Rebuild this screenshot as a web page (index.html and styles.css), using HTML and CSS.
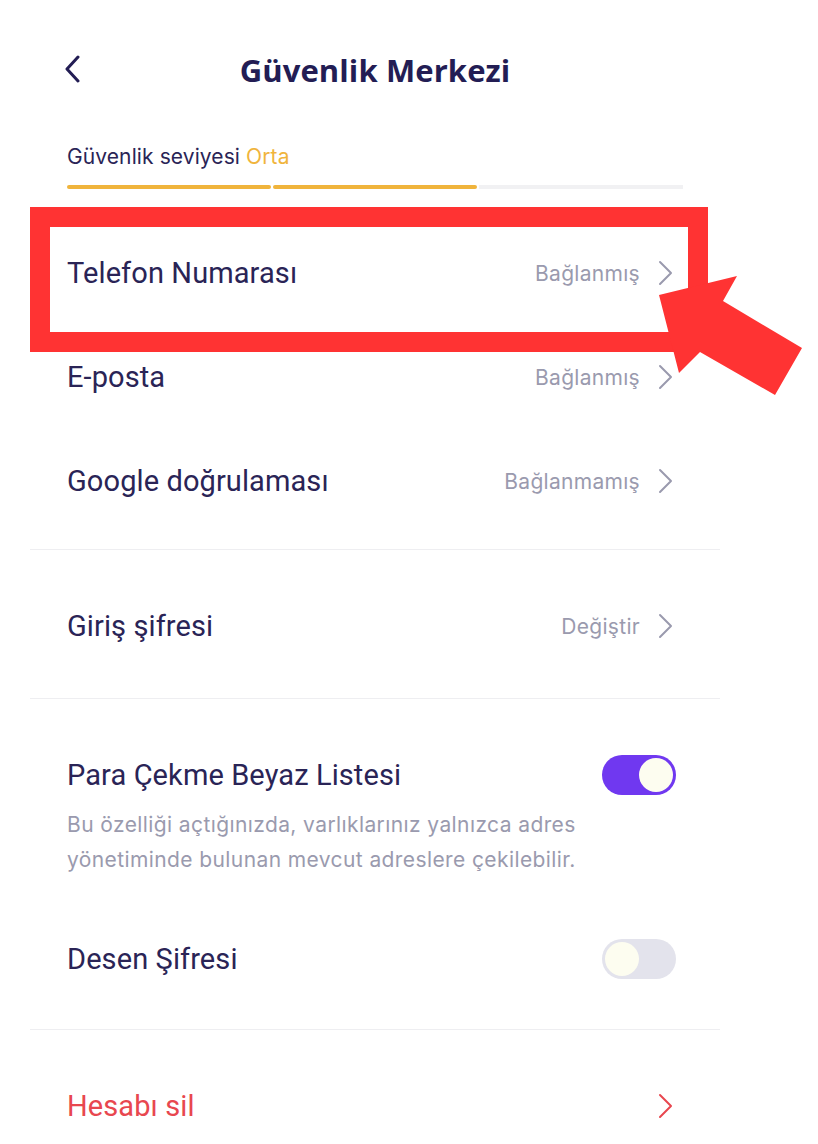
FILE: index.html
```html
<!DOCTYPE html>
<html lang="tr">
<head>
<meta charset="utf-8">
<title>Güvenlik Merkezi</title>
<link rel="stylesheet" href="styles.css">
</head>
<body>
<div class="page">
  <header class="header">
    <svg class="back" width="18" height="28" viewBox="0 0 18 28"><path d="M14 2 L3 14 L14 26" fill="none" stroke="#231d54" stroke-width="3" stroke-linecap="round" stroke-linejoin="round"/></svg>
    <h1 class="title">Güvenlik Merkezi</h1>
  </header>

  <section class="level">
    <div class="level-label">Güvenlik seviyesi <span class="level-value">Orta</span></div>
    <div class="level-bar">
      <span class="seg on"></span><span class="seg on"></span><span class="seg"></span>
    </div>
  </section>

  <section class="group group-first">
    <div class="row">
      <span class="row-title">Telefon Numarası</span>
      <span class="row-right"><span class="row-value">Bağlanmış</span>
        <svg class="chev" width="16" height="26" viewBox="0 0 16 26"><path d="M2 2 L13 13 L2 24" fill="none" stroke="#9a9aae" stroke-width="2" stroke-linecap="round" stroke-linejoin="round"/></svg></span>
    </div>
    <div class="row">
      <span class="row-title">E-posta</span>
      <span class="row-right"><span class="row-value">Bağlanmış</span>
        <svg class="chev" width="16" height="26" viewBox="0 0 16 26"><path d="M2 2 L13 13 L2 24" fill="none" stroke="#9a9aae" stroke-width="2" stroke-linecap="round" stroke-linejoin="round"/></svg></span>
    </div>
    <div class="row">
      <span class="row-title">Google doğrulaması</span>
      <span class="row-right"><span class="row-value">Bağlanmamış</span>
        <svg class="chev" width="16" height="26" viewBox="0 0 16 26"><path d="M2 2 L13 13 L2 24" fill="none" stroke="#9a9aae" stroke-width="2" stroke-linecap="round" stroke-linejoin="round"/></svg></span>
    </div>
  </section>

  <div class="divider"></div>

  <section class="group group-pass">
    <div class="row">
      <span class="row-title">Giriş şifresi</span>
      <span class="row-right"><span class="row-value">Değiştir</span>
        <svg class="chev" width="16" height="26" viewBox="0 0 16 26"><path d="M2 2 L13 13 L2 24" fill="none" stroke="#9a9aae" stroke-width="2" stroke-linecap="round" stroke-linejoin="round"/></svg></span>
    </div>
  </section>

  <div class="divider"></div>

  <section class="group group-toggles">
    <div class="toggle-row">
      <span class="row-title">Para Çekme Beyaz Listesi</span>
      <span class="switch switch-on"><span class="knob"></span></span>
    </div>
    <p class="desc">Bu özelliği açtığınızda, varlıklarınız yalnızca adres yönetiminde bulunan mevcut adreslere çekilebilir.</p>
    <div class="toggle-row toggle-row-second">
      <span class="row-title">Desen Şifresi</span>
      <span class="switch"><span class="knob"></span></span>
    </div>
  </section>

  <div class="divider"></div>

  <section class="group group-delete">
    <div class="row">
      <span class="row-title danger">Hesabı sil</span>
      <span class="row-right">
        <svg class="chev" width="16" height="26" viewBox="0 0 16 26"><path d="M2 2 L13 13 L2 24" fill="none" stroke="#e8474f" stroke-width="2" stroke-linecap="round" stroke-linejoin="round"/></svg></span>
    </div>
  </section>

  <div class="highlight-box"></div>
  <svg class="highlight-arrow" width="818" height="1144" viewBox="0 0 818 1144">
    <polygon points="659,295 737,276 723,301 802,348 775,395 700,352 679,373" fill="#ff3333"/>
  </svg>
</div>
</body>
</html>
```

FILE: styles.css
```css
* { box-sizing: border-box; }
html, body { margin: 0; padding: 0; background: #ffffff; }
body {
  font-family: Roboto, "Noto Sans", "Liberation Sans", sans-serif;
  color: #2a2456;
}
.page {
  position: relative;
  width: 818px;
  height: 1144px;
  overflow: hidden;
}
.header {
  position: relative;
  width: 750px;
  height: 140px;
  display: flex;
  align-items: center;
  justify-content: center;
}
.back {
  position: absolute;
  left: 64px;
  top: 55px;
}
.title {
  margin: 0;
  font-family: "Open Sans", Lato, sans-serif;
  font-weight: 700;
  font-size: 31px;
  color: #231d54;
  letter-spacing: 0.1px;
}
.level {
  width: 750px;
  padding: 0 67px;
}
.level-label {
  height: 34px;
  line-height: 34px;
  font-family: Inter, Roboto, sans-serif;
  font-size: 21px;
  letter-spacing: 0.1px;
  color: #2a2456;
}
.level-value { color: #f0b43c; }
.level-bar {
  margin-top: 11px;
  display: flex;
  gap: 2px;
  width: 616px;
  height: 4px;
}
.seg {
  flex: 1;
  height: 4px;
  background: #f1f1f3;
}
.seg.on { background: #f0b43c; border-radius: 2px; }

.group { width: 750px; padding: 0 67px; }
.group-first { padding-top: 32px; padding-bottom: 16px; }
.group-pass { padding-top: 26px; padding-bottom: 22px; }
.group-toggles { padding-top: 56px; padding-bottom: 50px; }
.group-delete { padding-top: 26px; }

.row {
  height: 104px;
  display: flex;
  align-items: center;
  justify-content: space-between;
}
.group-pass .row, .group-delete .row { height: 100px; }
.row-title {
  font-size: 29px;
  letter-spacing: 0.1px;
  color: #2a2456;
}
.row-title.danger { color: #e8474f; }
.row-right {
  display: flex;
  align-items: center;
  gap: 18px;
  margin-right: 9px;
}
.row-value {
  font-family: Inter, Roboto, sans-serif;
  font-size: 21px;
  letter-spacing: 0.3px;
  color: #9a9aae;
}
.chev { display: block; }

.divider {
  width: 690px;
  height: 1px;
  margin-left: 30px;
  background: #eeeef1;
}

.toggle-row {
  height: 40px;
  display: flex;
  align-items: center;
  justify-content: space-between;
}
.toggle-row-second { margin-top: 62px; }
.desc {
  margin: 12px 0 0;
  width: 600px;
  font-family: Inter, Roboto, sans-serif;
  font-size: 21px;
  letter-spacing: 0.4px;
  line-height: 35px;
  color: #9a9aae;
}
.switch {
  position: relative;
  width: 74px;
  height: 40px;
  border-radius: 20px;
  background: #e3e3ec;
  margin-right: 7px;
}
.switch .knob {
  position: absolute;
  top: 3px;
  left: 3px;
  width: 34px;
  height: 34px;
  border-radius: 50%;
  background: #fdfdf0;
}
.switch-on { background: #7038f0; }
.switch-on .knob { left: 37px; }

.highlight-box {
  position: absolute;
  left: 30px;
  top: 207px;
  width: 678px;
  height: 145px;
  border: 20px solid #ff3333;
}
.highlight-arrow {
  position: absolute;
  left: 0;
  top: 0;
}
```
